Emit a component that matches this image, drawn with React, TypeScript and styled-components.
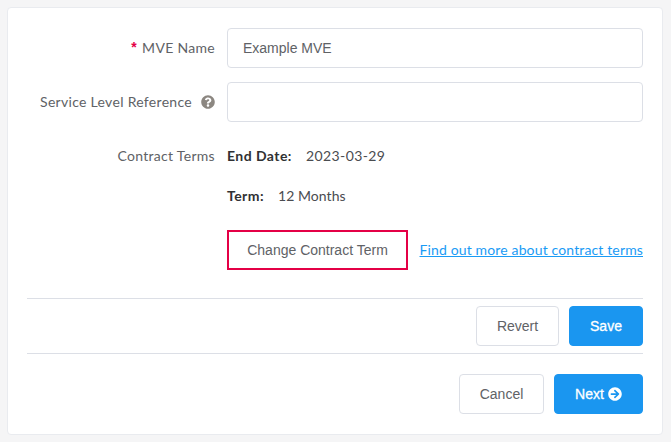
import React from "react";
import styled, { createGlobalStyle } from "styled-components";
import { FaQuestionCircle, FaArrowCircleRight } from "react-icons/fa";

const Global = createGlobalStyle`
  html, body { margin: 0; padding: 0; background: #f5f5f6; }
  body { font-family: Lato, "Noto Sans", sans-serif; }
  * { box-sizing: border-box; }
`;
const Page = styled.div`
  width: 671px;
  height: 442px;
  padding: 7px 8px 7px 7px;
`;
const Card = styled.main`
  height: 428px;
  background: #fff;
  border: 1px solid #e9ebef;
  border-radius: 4px;
  padding: 20px 19px 0 19px;
`;
const Row = styled.div<{ $mb: number; $h: number }>`
  display: grid;
  grid-template-columns: 188px 1fr;
  column-gap: 12px;
  align-items: center;
  height: ${(p) => p.$h}px;
  margin-bottom: ${(p) => p.$mb}px;
`;
const Label = styled.label`
  display: flex;
  justify-content: flex-end;
  align-items: center;
  padding-bottom: 2px;
  font-size: 14px;
  letter-spacing: 0.3px;
  color: #606266;
  white-space: nowrap;
`;
const Star = styled.span`
  color: #e40046;
  font: 700 14px "Liberation Sans", Arial, sans-serif;
  margin-right: 5px;
`;
const Help = styled(FaQuestionCircle)`
  color: #8c8781;
  width: 14px;
  height: 14px;
  margin-left: 9px;
  margin-top: 2px;
`;
const Input = styled.input`
  width: 100%;
  height: 40px;
  border: 1px solid #dcdfe6;
  border-radius: 4px;
  padding: 0 15px;
  font: 14px "Liberation Sans", Arial, sans-serif;
  color: #606266;
  outline: none;
`;
const Terms = styled.div`
  font-size: 14px;
  color: #303133;
  display: flex;
  padding-bottom: 2px;
`;
const TermLabel = styled.strong<{ $w: number }>`
  font-weight: 700;
  letter-spacing: 0.45px;
  width: ${(p) => p.$w}px;
`;
const TermValue = styled.span<{ $ls: number }>`
  color: #4a4c50;
  letter-spacing: ${(p) => p.$ls}px;
`;
const ChangeRow = styled.div`
  display: flex;
  align-items: center;
  justify-content: space-between;
`;
const Button = styled.button<{ $w: number; $primary?: boolean }>`
  width: ${(p) => p.$w}px;
  height: 40px;
  padding: 0;
  border-radius: 4px;
  border: 1px solid ${(p) => (p.$primary ? "#1a96f0" : "#dcdfe6")};
  background: ${(p) => (p.$primary ? "#1a96f0" : "#fff")};
  color: ${(p) => (p.$primary ? "#fff" : "#606266")};
  font: 400 14px "Liberation Sans", Arial, sans-serif;
  -webkit-text-stroke: ${(p) => (p.$primary ? "0.3px #fff" : "0")};
  display: inline-flex;
  align-items: center;
  justify-content: center;
  gap: 4px;
`;
const ChangeButton = styled.button`
  width: 181px;
  height: 40px;
  padding: 0;
  background: #fff;
  border: 2px solid #e40046;
  color: #606266;
  font: 14px "Liberation Sans", Arial, sans-serif;
`;
const Link = styled.a`
  font-size: 14px;
  letter-spacing: 0.14px;
  color: #1a9bf5;
  text-decoration: underline;
  padding-bottom: 2px;
`;
const Bar = styled.div<{ $h: number }>`
  display: flex;
  justify-content: flex-end;
  align-items: center;
  gap: 10px;
  height: ${(p) => p.$h}px;
  border-top: 1px solid #dcdfe6;
`;

export default function App() {
  return (
    <Page>
      <Global />
      <Card>
        <Row $h={40} $mb={14}>
          <Label><Star>*</Star>MVE Name</Label>
          <Input defaultValue="Example MVE" />
        </Row>
        <Row $h={40} $mb={14}>
          <Label>Service Level Reference<Help /></Label>
          <Input />
        </Row>
        <Row $h={40} $mb={0}>
          <Label>Contract Terms</Label>
          <Terms><TermLabel $w={79}>End Date:</TermLabel><TermValue $ls={0.4}>2023-03-29</TermValue></Terms>
        </Row>
        <Row $h={40} $mb={14}>
          <span />
          <Terms><TermLabel $w={51}>Term:</TermLabel><TermValue $ls={0.05}>12 Months</TermValue></Terms>
        </Row>
        <Row $h={40} $mb={28}>
          <span />
          <ChangeRow>
            <ChangeButton>Change Contract Term</ChangeButton>
            <Link href="#">Find out more about contract terms</Link>
          </ChangeRow>
        </Row>
        <Bar $h={55}>
          <Button $w={83}>Revert</Button>
          <Button $w={74} $primary>Save</Button>
        </Bar>
        <Bar $h={81}>
          <Button $w={85}>Cancel</Button>
          <Button $w={89} $primary>Next <FaArrowCircleRight size={14} /></Button>
        </Bar>
      </Card>
    </Page>
  );
}
